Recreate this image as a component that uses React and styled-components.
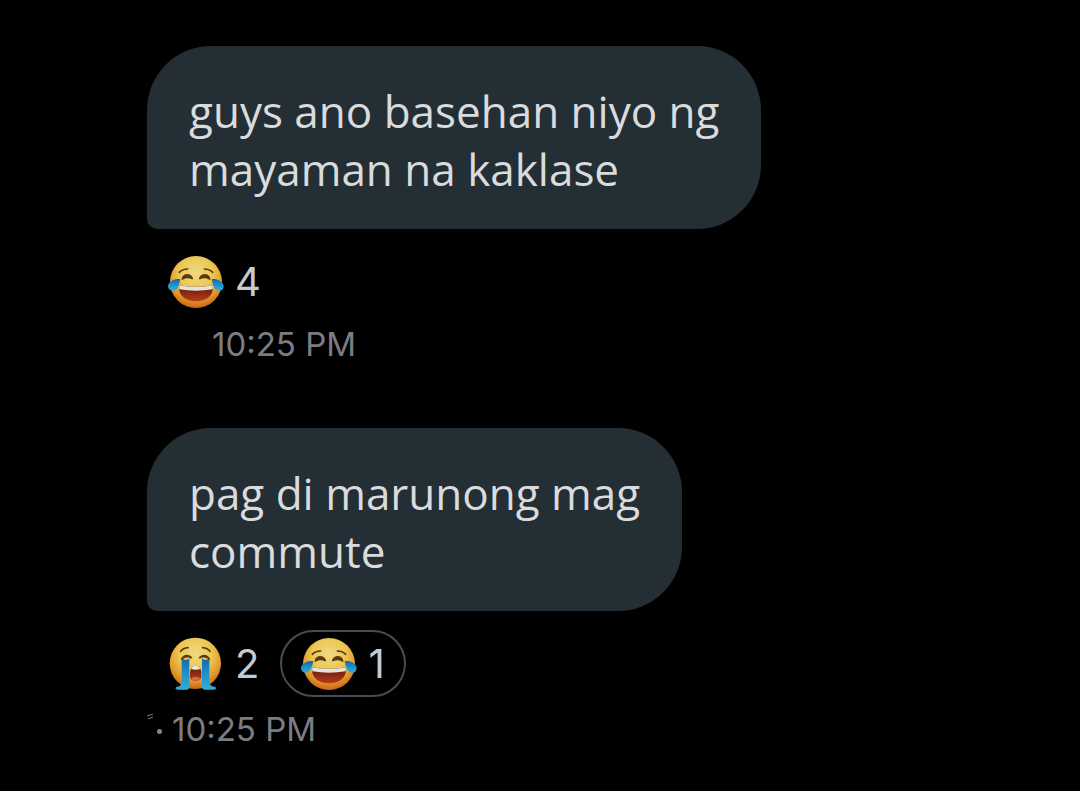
import React from "react";
import styled, { createGlobalStyle } from "styled-components";

const GlobalStyle = createGlobalStyle`
  * { box-sizing: border-box; }
  body {
    margin: 0;
    background: #000;
    font-family: "Open Sans", "Noto Sans", sans-serif;
  }
`;

const Thread = styled.main`
  display: flex;
  flex-direction: column;
  align-items: flex-start;
  gap: 62px;
  min-height: 100vh;
  padding: 46px 32px 36px 147px;
  overflow: hidden;
`;

const Message = styled.article`
  display: flex;
  flex-direction: column;
  align-items: flex-start;
`;

const Bubble = styled.p`
  margin: 0;
  padding: 36px 42px 31px;
  border-radius: 64px 64px 64px 10px;
  background: #242e35;
  color: #d9dbdd;
  font-size: 44px;
  line-height: 58px;
`;

const Line = styled.span`
  display: block;
`;

const Reactions = styled.div`
  display: flex;
  padding: 19px 0 ${(p) => (p.$roomy ? 3 : 0)}px;
`;

const Reaction = styled.button`
  display: flex;
  align-items: center;
  gap: 11px;
  height: 67px;
  padding: 0 19px;
  border: 2px solid ${(p) => (p.$selected ? "#474c53" : "transparent")};
  border-radius: 34px;
  background: transparent;
  color: #c3ccd4;
  font: 400 40px/52px Inter, sans-serif;
`;

const EmojiIcon = styled.svg`
  display: block;
  width: 56px;
  height: 56px;
`;

const Meta = styled.footer`
  display: flex;
  align-items: center;
  gap: 10px;
  padding-left: ${(p) => p.$indent}px;
  color: #7b7d83;
  font: 400 33px/44px Inter, sans-serif;
  margin-top: 7px;
`;

const Dot = styled.i`
  width: 5px;
  height: 5px;
  margin-top: 4px;
  border-radius: 50%;
  background: #85898e;
`;

const Mark = styled.svg`
  width: 8px;
  height: 8px;
  margin-right: -8px;
  align-self: flex-start;
  margin-top: 6px;
`;

function FaceFill({ id }) {
  return (
    <defs>
      <radialGradient id={id + "f"} cx="50%" cy="32%" r="70%">
        <stop offset="0" stopColor="#efd982" />
        <stop offset=".45" stopColor="#ebc853" />
        <stop offset=".75" stopColor="#e4982a" />
        <stop offset="1" stopColor="#c65f16" />
      </radialGradient>
      <linearGradient id={id + "t"} x1="0" y1="0" x2="0" y2="1">
        <stop offset="0" stopColor="#1761ac" />
        <stop offset=".45" stopColor="#1a8fc9" />
        <stop offset="1" stopColor="#31aed5" />
      </linearGradient>
      <linearGradient id={id + "m"} x1="0" y1="0" x2="0" y2="1">
        <stop offset="0" stopColor="#5c190c" />
        <stop offset="1" stopColor="#b83c18" />
      </linearGradient>
    </defs>
  );
}

function JoyEmoji({ id }) {
  return (
    <EmojiIcon viewBox="0 0 168 168" role="img" aria-label="Tears of joy">
      <FaceFill id={id} />
      <circle cx="84" cy="84" r="78" fill={`url(#${id}f)`} />
      <path d="M34 55Q43 45 59 45M109 45Q125 45 134 55" strokeWidth="5" fill="none" stroke="#60360e" strokeLinecap="round" />
      <g fill="#60360e">
        <path d="M41 74C44 56 69 56 75 73C76 77 72 77 70 75C63 71 52 72 46 76C43 79 40 78 41 74Z" />
        <path d="M127 74C124 56 99 56 93 73C92 77 96 77 98 75C105 71 116 72 122 76C125 79 128 78 127 74Z" />
      </g>
      <path d="M33 94Q84 103 135 94C138 126 115 142 84 142S30 126 33 94Z" fill={`url(#${id}m)`} />
      <path d="M33 94Q84 103 135 94L134 106Q84 114 34 106Z" fill="#e5e3da" />
      <path d="M37 75C25 74 3 79 0 95C-1 107 12 114 22 108C32 102 34 88 37 75Z" fill={`url(#${id}t)`} />
      <path d="M131 75C143 74 164 79 167 95C168 107 156 114 146 108C136 102 134 88 131 75Z" fill={`url(#${id}t)`} />
    </EmojiIcon>
  );
}

function SobEmoji({ id }) {
  return (
    <EmojiIcon viewBox="0 0 168 168" role="img" aria-label="Loudly crying">
      <FaceFill id={id} />
      <circle cx="82" cy="82" r="77" fill={`url(#${id}f)`} />
      <path d="M41 66C46 74 62 72 64 66V150Q66 161 54 161H30Q18 159 25 153Q40 152 41 139Z" fill={`url(#${id}t)`} />
      <path d="M124 66C118 74 104 72 102 66V150Q100 161 112 161H137Q149 159 142 153Q126 152 124 139Z" fill={`url(#${id}t)`} />
      <path d="M38 46Q45 36 60 35M104 35Q119 36 126 46" strokeWidth="5" fill="none" stroke="#60360e" strokeLinecap="round" />
      <g fill="#60360e">
        <path d="M39 69C43 55 63 51 72 64C74 68 69 69 66 66C58 63 48 65 43 71C39 73 38 72 39 69Z" />
        <path d="M126 69C122 55 102 51 93 64C91 68 96 69 99 66C107 63 117 65 122 71C126 73 127 72 126 69Z" />
      </g>
      <path d="M66 112C66 98 73 89 83 89S100 98 100 112V119C100 130 93 135 83 135S66 130 66 119Z" fill={`url(#${id}m)`} />
      <path d="M69 99Q73 89 83 89T97 99Q83 103 69 99Z" fill="#ece5d8" />
      <ellipse cx="83" cy="128" rx="12" ry="6" fill="#d36a50" />
    </EmojiIcon>
  );
}

const emojis = { joy: JoyEmoji, sob: SobEmoji };

const messages = [
  {
    id: "a",
    lines: ["guys ano basehan niyo ng", "mayaman na kaklase"],
    reactions: [{ kind: "joy", count: 4 }],
    indent: 65,
    time: "10:25 PM",
  },
  {
    id: "b",
    lines: ["pag di marunong mag", "commute"],
    reactions: [
      { kind: "sob", count: 2 },
      { kind: "joy", count: 1, selected: true },
    ],
    dotted: true,
    indent: 0,
    time: "10:25 PM",
  },
];

export default function App() {
  return (
    <>
      <GlobalStyle />
      <Thread>
        {messages.map((m) => (
          <Message key={m.id}>
            <Bubble>
              {m.lines.map((line) => (
                <Line key={line}>{line} </Line>
              ))}
            </Bubble>
            <Reactions $roomy={m.reactions.some((r) => r.selected)}>
              {m.reactions.map((r) => {
                const Emoji = emojis[r.kind];
                return (
                  <Reaction key={r.kind} type="button" $selected={r.selected} aria-pressed={!!r.selected}>
                    <Emoji id={m.id + r.kind} />
                    <span>{r.count}</span>
                  </Reaction>
                );
              })}
            </Reactions>
            <Meta $indent={m.indent}>
              {m.dotted && (
                <>
                  <Mark viewBox="0 0 8 8" aria-hidden="true">
                    <path d="M0 3L6 1M1 6L6 4" stroke="#777b80" fill="none" />
                  </Mark>
                  <Dot />
                </>
              )}
              <time dateTime="22:25">{m.time}</time>
            </Meta>
          </Message>
        ))}
      </Thread>
    </>
  );
}
